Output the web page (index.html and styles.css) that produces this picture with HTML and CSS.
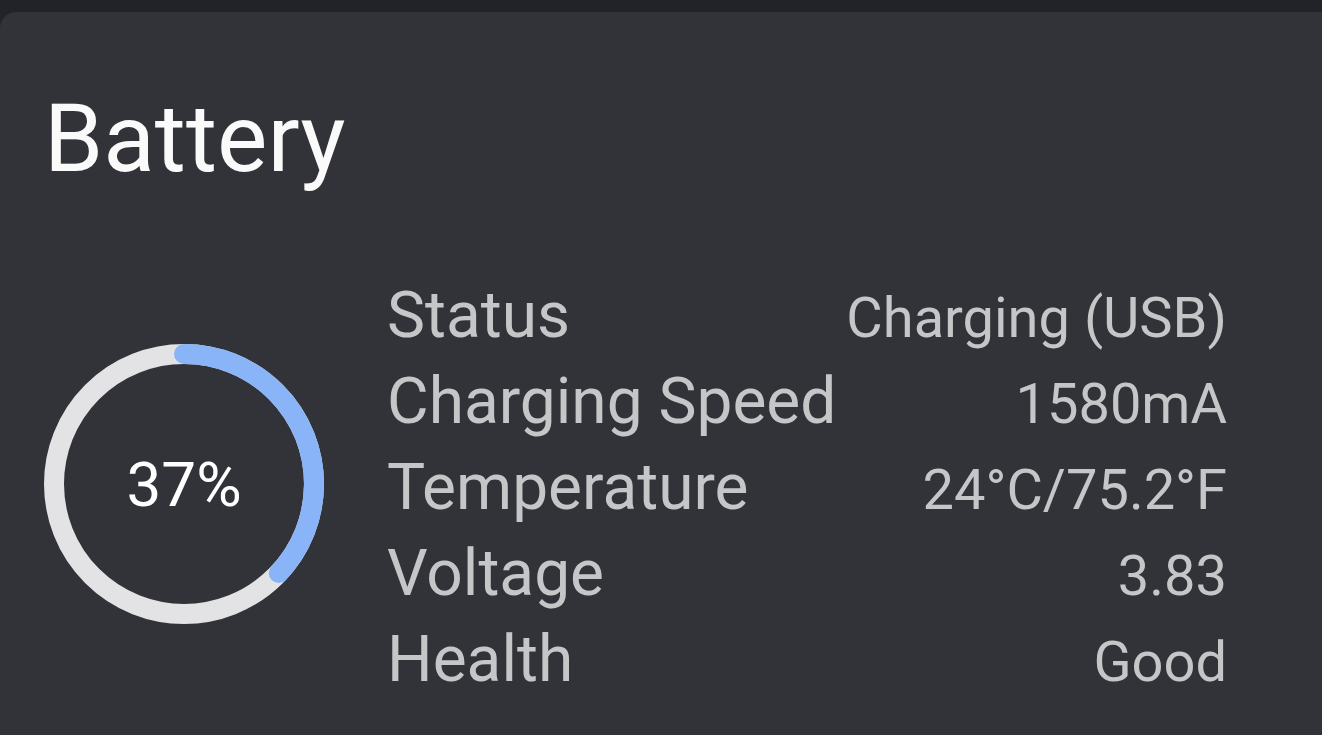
FILE: index.html
```html
<!DOCTYPE html>
<html lang="en">

<head>
  <meta charset="UTF-8">
  <meta name="viewport" content="width=device-width, initial-scale=1.0">
  <title>Battery</title>
  <link rel="stylesheet" href="styles.css">
</head>

<body>
  <section class="card">
    <h1 class="card-title">Battery</h1>

    <div class="battery">
      <div class="gauge">
        <svg class="gauge-ring" viewBox="0 0 280 280" width="280" height="280">
          <circle class="gauge-track" cx="140" cy="140" r="130"></circle>
          <!-- 37% of 2*pi*130 = 302.2 -->
          <circle class="gauge-fill" cx="140" cy="140" r="130" stroke-dasharray="302.2 1000"
            transform="rotate(-90 140 140)"></circle>
        </svg>
        <span class="gauge-label">37%</span>
      </div>

      <dl class="stats">
        <dt>Status</dt>
        <dd>Charging (USB)</dd>
        <dt>Charging Speed</dt>
        <dd>1580mA</dd>
        <dt>Temperature</dt>
        <dd>24°C/75.2°F</dd>
        <dt>Voltage</dt>
        <dd>3.83</dd>
        <dt>Health</dt>
        <dd>Good</dd>
      </dl>
    </div>
  </section>
</body>

</html>
```

FILE: styles.css
```css
html {
  box-sizing: border-box;
}

*,
*::before,
*::after {
  box-sizing: inherit;
}

body {
  margin: 0;
  height: 100vh;
  overflow: hidden;
  background-color: #222328;
  font-family: Roboto, "Noto Sans", sans-serif;
}

.card {
  margin-top: 12px;
  height: calc(100vh - 12px);
  padding: 79px 0 0 44px;
  background-color: #323338;
  border-top-left-radius: 16px;
}

.card-title {
  margin: 0;
  font-size: 95px;
  font-weight: 400;
  line-height: 1;
  color: #fafafa;
}

.battery {
  display: flex;
  align-items: center;
  margin-top: 87px;
}

.gauge {
  position: relative;
  flex: none;
  width: 280px;
  height: 280px;
  margin-bottom: 8px;
}

.gauge-ring {
  display: block;
}

.gauge-track,
.gauge-fill {
  fill: none;
  stroke-width: 20;
}

.gauge-track {
  stroke: #e3e3e5;
}

.gauge-fill {
  stroke: #8ab4f8;
  stroke-linecap: round;
}

.gauge-label {
  position: absolute;
  inset: 0;
  display: flex;
  align-items: center;
  justify-content: center;
  font-size: 62px;
  color: #fff;
}

.stats {
  display: grid;
  grid-template-columns: auto 1fr;
  align-items: baseline;
  width: 840px;
  margin: 0 0 0 63px;
  color: #c5c6c8;
}

.stats dt,
.stats dd {
  margin: 0;
  white-space: nowrap;
}

.stats dt {
  font-size: 64px;
  line-height: 86px;
}

/* smaller line box so the baseline-aligned row stays 86px tall */
.stats dd {
  font-size: 56px;
  line-height: 80px;
  text-align: right;
}
```
